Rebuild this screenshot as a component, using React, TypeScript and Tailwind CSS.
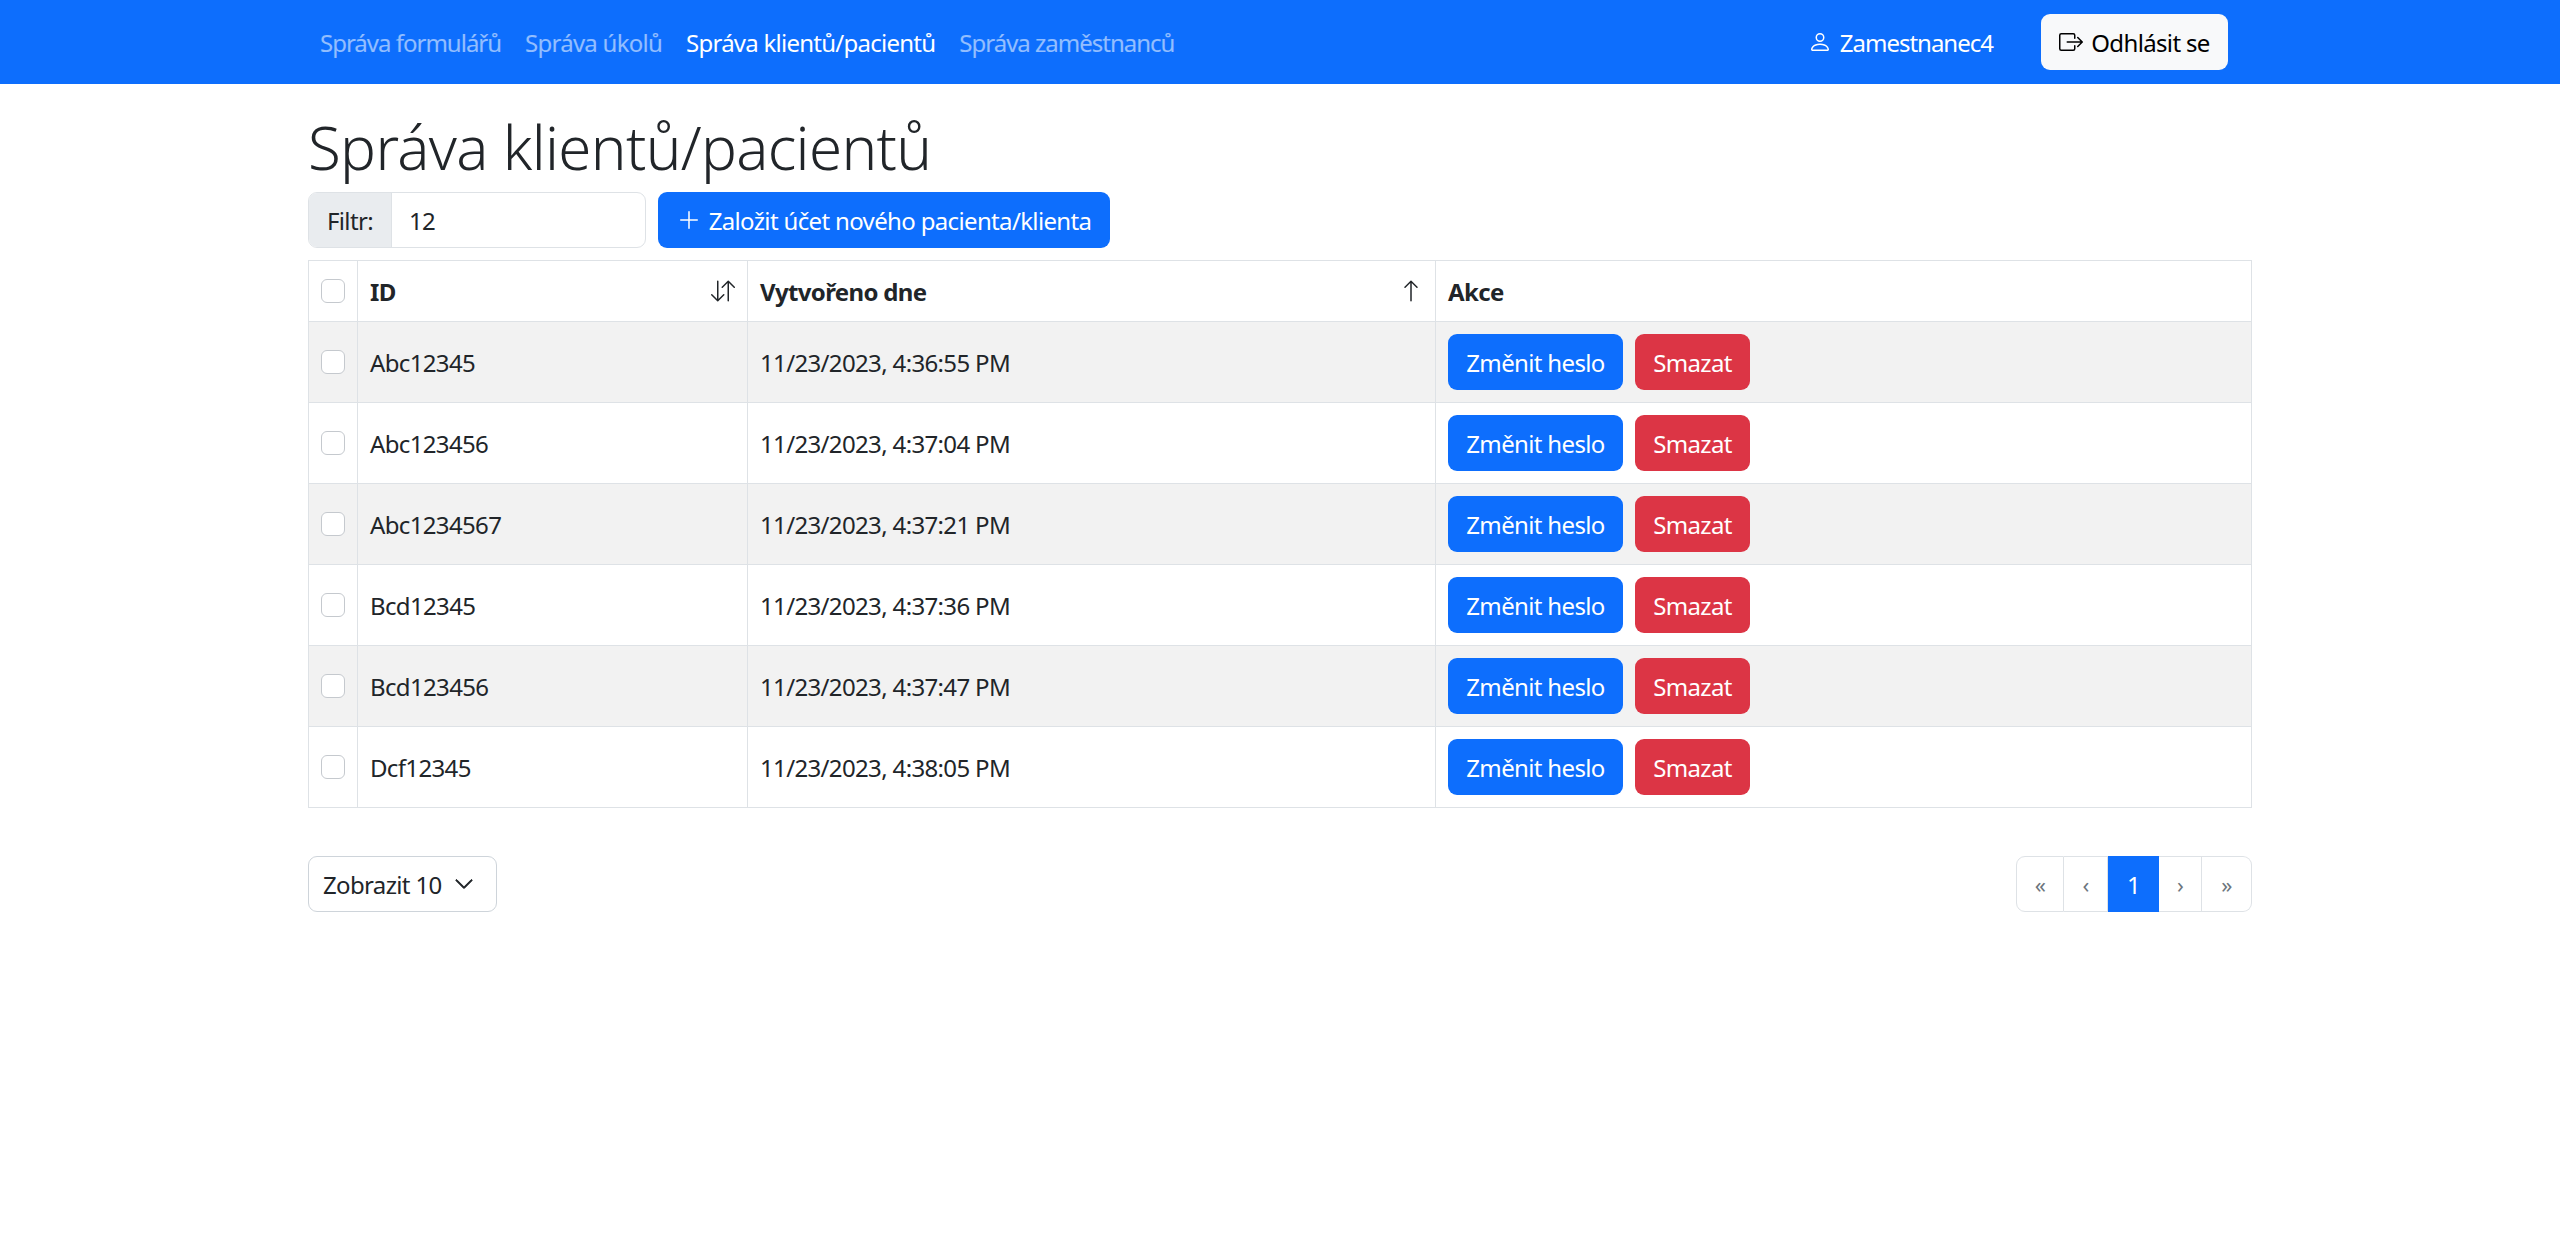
import { BsArrowDownUp, BsArrowUp, BsBoxArrowRight, BsChevronDown, BsPerson, BsPlusLg } from "react-icons/bs";

const rows = [
  { id: "Abc12345", created: "11/23/2023, 4:36:55 PM" },
  { id: "Abc123456", created: "11/23/2023, 4:37:04 PM" },
  { id: "Abc1234567", created: "11/23/2023, 4:37:21 PM" },
  { id: "Bcd12345", created: "11/23/2023, 4:37:36 PM" },
  { id: "Bcd123456", created: "11/23/2023, 4:37:47 PM" },
  { id: "Dcf12345", created: "11/23/2023, 4:38:05 PM" },
];

function Checkbox() {
  return <span className="block w-6 h-6 rounded-[6px] border border-[#c5c9ce] bg-white" />;
}

export default function App() {
  return (
    <div className="min-h-[1240px] bg-white text-[#212529] text-[24px] tracking-[-0.65px] font-['Noto_Sans',sans-serif]">
      <nav className="h-[84px] bg-[#0d6efd] flex justify-center">
        <div className="w-[1944px] flex items-center">
          <div className="flex items-center pl-3 gap-6 tracking-[-1px] pt-[2px]">
            <a className="text-white/55">Správa formulářů</a>
            <a className="text-white/55 tracking-[-0.75px]">Správa úkolů</a>
            <a className="text-white tracking-[-0.75px]">Správa klientů/pacientů</a>
            <a className="text-white/55">Správa zaměstnanců</a>
          </div>
          <div className="ml-auto flex items-center mr-6">
            <span className="flex items-center gap-2 text-white mr-12 tracking-[-1px]">
              <BsPerson className="w-6 h-6" />
              <span className="pt-[2px]">Zamestnanec4</span>
            </span>
            <button className="h-14 w-[187px] rounded-[9px] bg-[#f8f9fa] text-black flex items-center justify-center gap-2">
              <BsBoxArrowRight className="w-6 h-6" />
              <span className="pt-[2px]">Odhlásit se</span>
            </button>
          </div>
        </div>
      </nav>

      <main className="w-[1944px] mx-auto">
        <h1 className="text-[60px] leading-[72px] pt-[27px] font-light tracking-[-0.65px] mb-[9px]">Správa klientů/pacientů</h1>

        <div className="flex gap-3 mb-3">
          <div className="flex w-[338px] h-14 rounded-[9px] border border-[#dee2e6] overflow-hidden">
            <span className="w-[83px] bg-[#e9ecef] border-r border-[#dee2e6] flex items-center justify-center pt-[2px]">Filtr:</span>
            <span className="flex-1 flex items-center pl-[17px] pt-[2px]">12</span>
          </div>
          <button className="h-14 w-[452px] rounded-[9px] bg-[#0d6efd] text-white flex items-center justify-center gap-2">
            <BsPlusLg className="w-6 h-6" />
            <span className="pt-[2px]">Založit účet nového pacienta/klienta</span>
          </button>
        </div>

        <table className="w-full table-fixed border-collapse border border-[#dee2e6]">
          <colgroup>
            <col className="w-[49px]" />
            <col className="w-[390px]" />
            <col className="w-[688px]" />
            <col />
          </colgroup>
          <thead>
            <tr className="h-[61px]">
              <th className="border border-[#dee2e6] px-3"><Checkbox /></th>
              <th className="border border-[#dee2e6] px-3 text-left font-bold">
                <div className="flex items-center justify-between"><span className="pt-[2px]">ID</span><BsArrowDownUp className="w-6 h-6" /></div>
              </th>
              <th className="border border-[#dee2e6] px-3 text-left font-bold">
                <div className="flex items-center justify-between"><span className="pt-[2px]">Vytvořeno dne</span><BsArrowUp className="w-6 h-6" /></div>
              </th>
              <th className="border border-[#dee2e6] px-3 text-left font-bold"><span className="block pt-[2px]">Akce</span></th>
            </tr>
          </thead>
          <tbody>
            {rows.map((row, i) => (
              <tr key={row.id} className={i % 2 === 0 ? "h-[81px] bg-[#f2f2f2]" : "h-[81px] bg-white"}>
                <td className="border border-[#dee2e6] px-3"><Checkbox /></td>
                <td className="border border-[#dee2e6] px-3 pt-[2px]">{row.id}</td>
                <td className="border border-[#dee2e6] px-3 pt-[2px]">{row.created}</td>
                <td className="border border-[#dee2e6] px-3">
                  <div className="flex gap-3">
                    <button className="h-14 w-[175px] rounded-[9px] bg-[#0d6efd] text-white pt-[2px]">Změnit heslo</button>
                    <button className="h-14 w-[115px] rounded-[9px] bg-[#dc3545] text-white pt-[2px]">Smazat</button>
                  </div>
                </td>
              </tr>
            ))}
          </tbody>
        </table>

        <div className="flex justify-between mt-12">
          <button className="h-14 w-[189px] rounded-[9px] border border-[#ced4da] bg-white flex items-center pl-[14px] gap-3">
            <span className="pt-[2px]">Zobrazit 10</span>
            <BsChevronDown className="w-5 h-5 stroke-[0.8px]" />
          </button>
          <div className="flex h-14 text-[22px] text-[#6c757d]">
            <span className="w-12 flex items-center justify-center border border-[#dee2e6] rounded-l-[9px]">«</span>
            <span className="w-11 flex items-center justify-center border-y border-r border-[#dee2e6]">‹</span>
            <span className="w-[51px] flex items-center justify-center bg-[#0d6efd] text-white text-[24px] pt-[2px]">1</span>
            <span className="w-[43px] flex items-center justify-center border-y border-r border-[#dee2e6]">›</span>
            <span className="w-[50px] flex items-center justify-center border-y border-r border-[#dee2e6] rounded-r-[9px]">»</span>
          </div>
        </div>
      </main>
    </div>
  );
}
